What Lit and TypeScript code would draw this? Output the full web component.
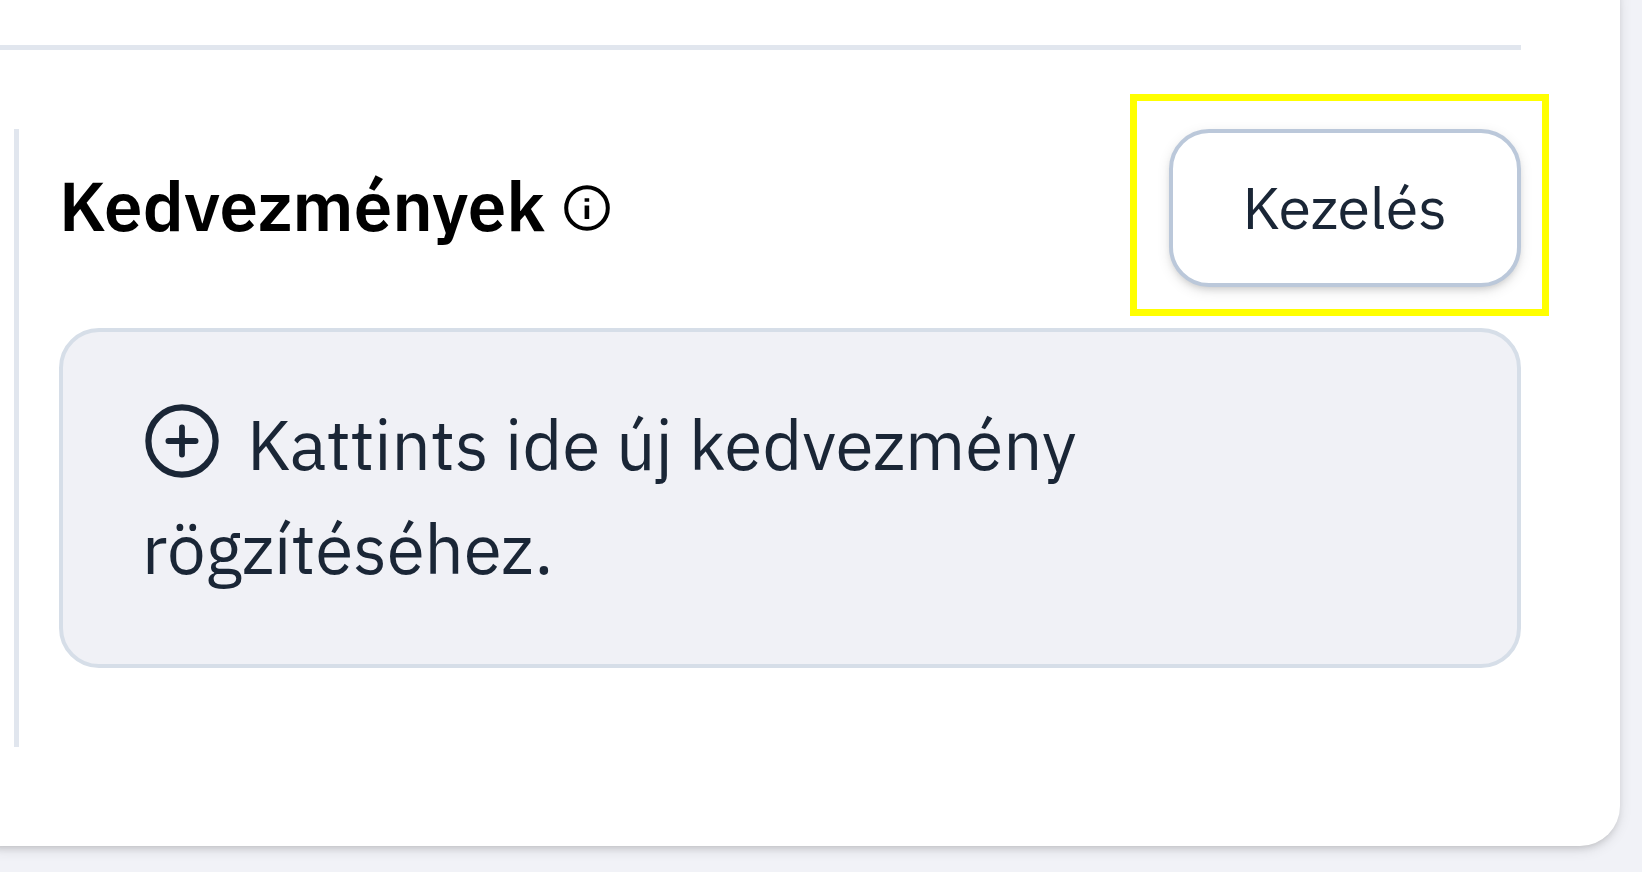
import { LitElement, html, css } from "lit";
import { customElement } from "lit/decorators.js";

@customElement("app-root")
export class AppRoot extends LitElement {
  static styles = css`
    :host {
      display: block;
      box-sizing: border-box;
      min-height: 100vh;
      padding: 0 22px 26px 0;
      background: #f1f2f7;
      color: #1a2636;
      font-family: "IBM Plex Sans", Roboto, "Liberation Sans", sans-serif;
      overflow: hidden;
    }
    /* The card runs on past the top and left edges of the view. */
    .card {
      margin: -40px 0 0 -40px;
      padding: 85px 99px 99px 40px;
      background: #fff;
      border-radius: 40px;
      box-shadow: 0 4px 13px rgba(0, 0, 0, 0.1), 0 4px 9px -4px rgba(0, 0, 0, 0.2);
    }
    .rule {
      height: 5px;
      margin: 0;
      border: 0;
      background: #e1e6ee;
    }
    .discounts {
      margin: 79px 0 0 14px;
      padding: 0 0 79px 40px;
      border-left: 5px solid #e1e6ee;
    }
    .head {
      display: flex;
      align-items: center;
      justify-content: space-between;
      margin-bottom: 41px;
    }
    .title {
      display: flex;
      align-items: center;
      gap: 16px;
    }
    h2 {
      margin: 0;
      padding-bottom: 6px;
      color: #000;
      font-size: 69px;
      line-height: 104px;
      font-weight: 600;
    }
    .info {
      display: block;
      width: 52px;
      height: 52px;
      color: #000;
    }
    .marked {
      position: relative;
    }
    .marked::after {
      content: "";
      position: absolute;
      inset: -35px -28px -29px -39px;
      border: 7px solid #ff0;
      pointer-events: none;
    }
    button {
      font-family: inherit;
      font-weight: 400;
      color: inherit;
      cursor: pointer;
    }
    .manage {
      display: block;
      padding: 30px 70px 32px;
      border: 4px solid #bbc8da;
      border-radius: 40px;
      background: #fff;
      font-size: 59px;
      line-height: 88px;
      box-shadow: 0 4px 13px rgba(0, 0, 0, 0.1), 0 4px 9px -4px rgba(0, 0, 0, 0.2);
    }
    .add {
      display: block;
      width: 100%;
      padding: 60px 79px 64px;
      border: 4px solid #d6dee8;
      border-radius: 40px;
      background: #f0f1f6;
      font-size: 69px;
      line-height: 104px;
      text-align: left;
    }
    .plus {
      width: 82px;
      height: 82px;
      margin-right: 23px;
      vertical-align: -12px;
    }
  `;

  render() {
    return html`
      <main class="card">
        <hr class="rule" />
        <section class="discounts" aria-labelledby="discounts-title">
          <div class="head">
            <div class="title">
              <h2 id="discounts-title">Kedvezmények</h2>
              <svg class="info" viewBox="0 0 52 52" aria-hidden="true">
                <circle cx="26" cy="26" r="20.8" fill="none" stroke="currentColor" stroke-width="4" />
                <path d="M23.6 16.2h4.6v3.6h-4.6zM23.6 23.6h4.6v13.4h-4.6z" fill="currentColor" />
              </svg>
            </div>
            <div class="marked">
              <button class="manage" type="button">Kezelés</button>
            </div>
          </div>
          <button class="add" type="button"><svg class="plus" viewBox="0 0 82 82" fill="none" stroke="currentColor" stroke-linecap="round" aria-hidden="true"><circle cx="40" cy="41" r="33.6" stroke-width="6.2" /><path d="M40 27.4v27.2M26.4 41h27.2" stroke-width="5.8" /></svg>Kattints ide új kedvezmény rögzítéséhez.</button>
        </section>
      </main>
    `;
  }
}
